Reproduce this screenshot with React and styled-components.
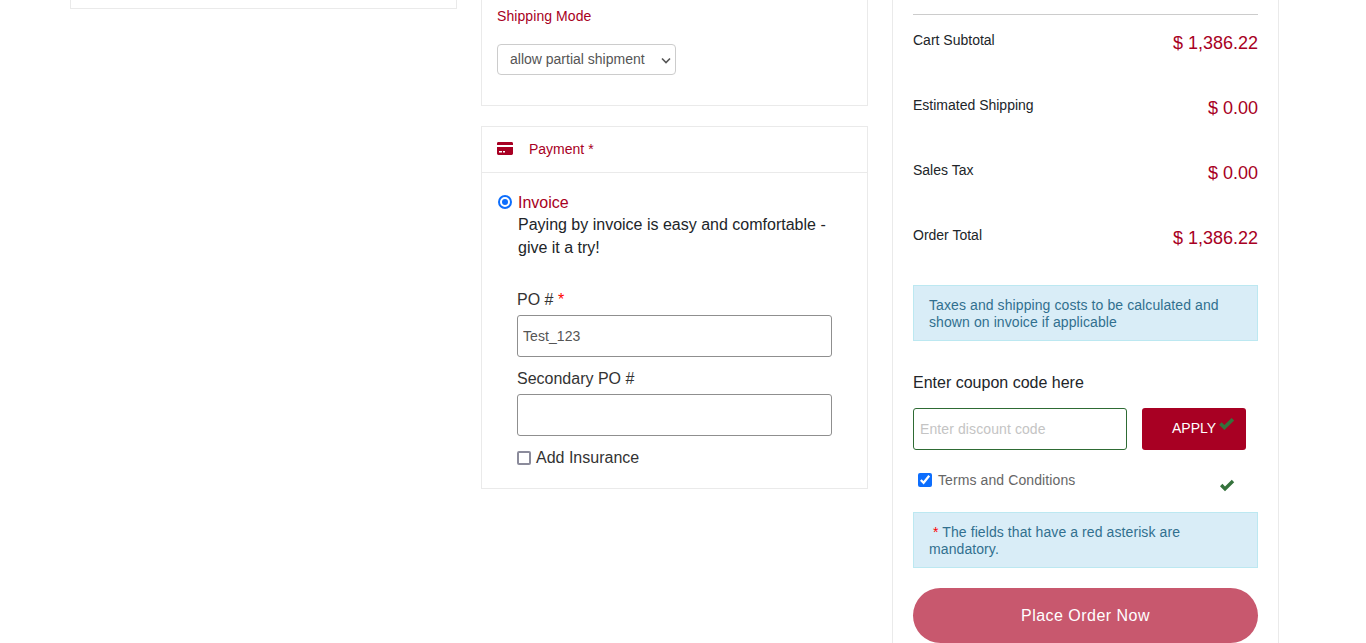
import React from "react";
import styled, { createGlobalStyle } from "styled-components";

const Global = createGlobalStyle`
  html, body { margin: 0; padding: 0; background: #fff; height: 643px; overflow: hidden; }
  body { font-family: "Liberation Sans", Arial, sans-serif; color: #212529; }
  * { box-sizing: border-box; }
`;
const Page = styled.div`
  display: grid;
  grid-template-columns: 387px 387px 387px;
  column-gap: 24px;
  padding-left: 70px;
  height: 643px;
  overflow: hidden;
`;
const Column = styled.div`display: flex; flex-direction: column;`;
const StubCard = styled.div`
  height: 9px;
  border: 1px solid #eaeaea;
  border-top: 0;
`;
const ShippingCard = styled.section`
  height: 106px;
  border: 1px solid #eaeaea;
  border-top: 0;
  padding: 8px 15px 0;
`;
const RedLabel = styled.div`
  font-size: 14px;
  line-height: 16px;
  letter-spacing: ${p => p.$wide ? ".08px" : "0"};
  color: #a80023;
`;
const SelectWrap = styled.div`
  position: relative;
  width: 179px;
  margin-top: 20px;
`;
const ModeSelect = styled.select`
  display: block;
  appearance: none;
  width: 179px;
  height: 31px;
  padding: 0 12px 2px;
  font: 14px "Liberation Sans", Arial, sans-serif;
  color: #555;
  background: #fff;
  border: 1px solid #ccc;
  border-radius: 4px;
`;
const SelectChevron = styled.svg`
  position: absolute;
  right: 4px;
  top: 13px;
  pointer-events: none;
`;
const PaymentCard = styled.section`
  margin-top: 20px;
  height: 363px;
  border: 1px solid #eaeaea;
`;
const CardHead = styled.header`
  height: 46px;
  display: flex;
  align-items: center;
  gap: 16px;
  padding: 0 15px 2px;
  border-bottom: 1px solid #eaeaea;
`;
const CardBody = styled.div`padding: 20px 35px 0 16px;`;
const InvoiceRow = styled.div`display: flex; gap: 6px;`;
const RadioDot = styled.span`
  width: 14px;
  height: 14px;
  margin-top: 2px;
  flex: none;
  display: flex;
  align-items: center;
  justify-content: center;
  border: 2px solid #0d6efd;
  border-radius: 50%;
  background: #fff;
  &::after {
    content: "";
    width: 6px;
    height: 6px;
    border-radius: 50%;
    background: #0d6efd;
  }
`;
const InvoiceTitle = styled.div`
  font-size: 16px;
  line-height: 19px;
  color: #a80023;
`;
const InvoiceText = styled.div`
  font-size: 16px;
  line-height: 23px;
  color: #212529;
  width: 320px;
  margin-top: 1px;
`;
const Fields = styled.div`padding: 31px 0 0 19px;`;
const FieldLabel = styled.label`
  display: block;
  font-size: 16px;
  line-height: 20px;
  color: #333;
  margin-bottom: 5px;
`;
const Star = styled.span`
  color: #f00;
  font-size: ${p => p.$small ? "14px" : "16px"};
  margin-left: ${p => p.$small ? "4px" : "0"};
`;
const TextInput = styled.input`
  display: block;
  width: 315px;
  height: 42px;
  padding: 0 5px;
  margin-bottom: 12px;
  font: 14px "Liberation Sans", Arial, sans-serif;
  letter-spacing: .08px;
  color: #555;
  background: #fff;
  border: 1px solid #8f8f8f;
  border-radius: 3px;
`;
const InsuranceRow = styled.label`
  display: flex;
  align-items: center;
  gap: 5px;
  font-size: 16px;
  line-height: 20px;
  color: #333;
  margin-top: 12px;
`;
const EmptyBox = styled.span`
  width: 14px;
  height: 14px;
  border: 2px solid #8b8b9b;
  border-radius: 2px;
  background: #fff;
`;
const Summary = styled.aside`
  height: 643px;
  border-left: 1px solid #eaeaea;
  border-right: 1px solid #eaeaea;
  padding: 14px 20px 0;
`;
const Rows = styled.div`
  border-top: 1px solid #ccc;
  margin-bottom: 10px;
`;
const Row = styled.div`
  height: 65px;
  display: flex;
  justify-content: space-between;
  padding-top: 17px;
`;
const RowLabel = styled.span`font-size: 14px; line-height: 16px; color: #212529;`;
const RowValue = styled.span`
  font-size: 18px;
  line-height: 20px;
  margin-top: 1px;
  color: #a80023;
`;
const Notice = styled.div`
  font-size: 14px;
  line-height: 17px;
  letter-spacing: .09px;
  color: #31708f;
  background: #d9edf7;
  border: 1px solid #bce8f1;
  padding: 11px 15px 10px;
  height: 56px;
`;
const CouponTitle = styled.div`
  font-size: 16px;
  line-height: 18px;
  color: #212529;
  margin-top: 33px;
`;
const CouponRow = styled.div`
  display: flex;
  gap: 15px;
  margin-top: 16px;
`;
const CouponInput = styled.input`
  width: 214px;
  height: 42px;
  padding: 0 6px;
  font: 14px "Liberation Sans", Arial, sans-serif;
  letter-spacing: .1px;
  background: #fff;
  border: 1px solid #2e6b34;
  border-radius: 3px;
  &::placeholder { color: #c4c4c4; opacity: 1; }
`;
const ApplyButton = styled.button`
  position: relative;
  width: 104px;
  height: 42px;
  margin: 0;
  padding: 0 0 2px 30px;
  text-align: left;
  font: 14px "Liberation Sans", Arial, sans-serif;
  color: #fff;
  background: #a80023;
  border: 0;
  border-radius: 3px;
`;
const ApplyCheck = styled.svg`
  position: absolute;
  left: 76px;
  top: 9px;
`;
const TermsRow = styled.div`
  display: flex;
  align-items: flex-start;
  height: 62px;
  padding: 22px 23px 0 5px;
`;
const TermsBox = styled.input`
  width: 14px;
  height: 14px;
  margin: 1px 6px 0 0;
  accent-color: #0d6efd;
`;
const TermsLabel = styled.span`
  font-size: 14px;
  line-height: 16px;
  letter-spacing: .1px;
  color: #666;
  flex: 1;
`;
const TermsCheck = styled.svg`margin-top: 7px;`;
const OrderButton = styled.button`
  display: block;
  width: 345px;
  height: 55px;
  margin: 20px 0 0;
  font: 16px "Liberation Sans", Arial, sans-serif;
  letter-spacing: .47px;
  color: #fff;
  background: #c8586e;
  border: 0;
  border-radius: 28px;
`;

const Check = ({ as: C, w, h }) => (
  <C width={w} height={h} viewBox="0 0 16 13" aria-hidden="true">
    <path d="M1 7.2 L3.4 4.8 L6 7.4 L12.8 .8 L15.2 3.2 L6 12.2 Z" fill="#35723c" />
  </C>
);

export default function App() {
  return (
    <>
      <Global />
      <Page>
        <Column><StubCard /></Column>
        <Column>
          <ShippingCard>
            <RedLabel $wide>Shipping Mode</RedLabel>
            <SelectWrap>
              <ModeSelect defaultValue="p">
                <option value="p">allow partial shipment</option>
              </ModeSelect>
              <SelectChevron width="12" height="7" viewBox="0 0 12 7" aria-hidden="true">
                <path d="M2 1.5 L6 5.5 L10 1.5" fill="none" stroke="#555" strokeWidth="1.6" />
              </SelectChevron>
            </SelectWrap>
          </ShippingCard>
          <PaymentCard>
            <CardHead>
              <svg width="16" height="13" viewBox="0 0 16 13" aria-hidden="true">
                <path d="M1.4 0h13.2C15.4 0 16 .6 16 1.4V3H0V1.4C0 .6.6 0 1.4 0zM0 5h16v6.6c0 .8-.6 1.4-1.4 1.4H1.4C.6 13 0 12.4 0 11.6zM2 9v1.5h3V9zm4 0v1.5h2V9z" fill="#a80023" fillRule="evenodd" />
              </svg>
              <RedLabel>Payment *</RedLabel>
            </CardHead>
            <CardBody>
              <InvoiceRow>
                <RadioDot />
                <div>
                  <InvoiceTitle>Invoice</InvoiceTitle>
                  <InvoiceText>Paying by invoice is easy and comfortable - give it a try!</InvoiceText>
                </div>
              </InvoiceRow>
              <Fields>
                <FieldLabel>PO # <Star>*</Star></FieldLabel>
                <TextInput defaultValue="Test_123" />
                <FieldLabel>Secondary PO #</FieldLabel>
                <TextInput />
                <InsuranceRow><EmptyBox />Add Insurance</InsuranceRow>
              </Fields>
            </CardBody>
          </PaymentCard>
        </Column>
        <Summary>
          <Rows>
            <Row><RowLabel>Cart Subtotal</RowLabel><RowValue>$ 1,386.22</RowValue></Row>
            <Row><RowLabel>Estimated Shipping</RowLabel><RowValue>$ 0.00</RowValue></Row>
            <Row><RowLabel>Sales Tax</RowLabel><RowValue>$ 0.00</RowValue></Row>
            <Row><RowLabel>Order Total</RowLabel><RowValue>$ 1,386.22</RowValue></Row>
          </Rows>
          <Notice>Taxes and shipping costs to be calculated and shown on invoice if applicable</Notice>
          <CouponTitle>Enter coupon code here</CouponTitle>
          <CouponRow>
            <CouponInput placeholder="Enter discount code" />
            <ApplyButton>APPLY<Check as={ApplyCheck} w={17} h={14} /></ApplyButton>
          </CouponRow>
          <TermsRow>
            <TermsBox type="checkbox" defaultChecked />
            <TermsLabel>Terms and Conditions</TermsLabel>
            <Check as={TermsCheck} w={16} h={13} />
          </TermsRow>
          <Notice><Star $small>*</Star> The fields that have a red asterisk are mandatory.</Notice>
          <OrderButton>Place Order Now</OrderButton>
        </Summary>
      </Page>
    </>
  );
}
